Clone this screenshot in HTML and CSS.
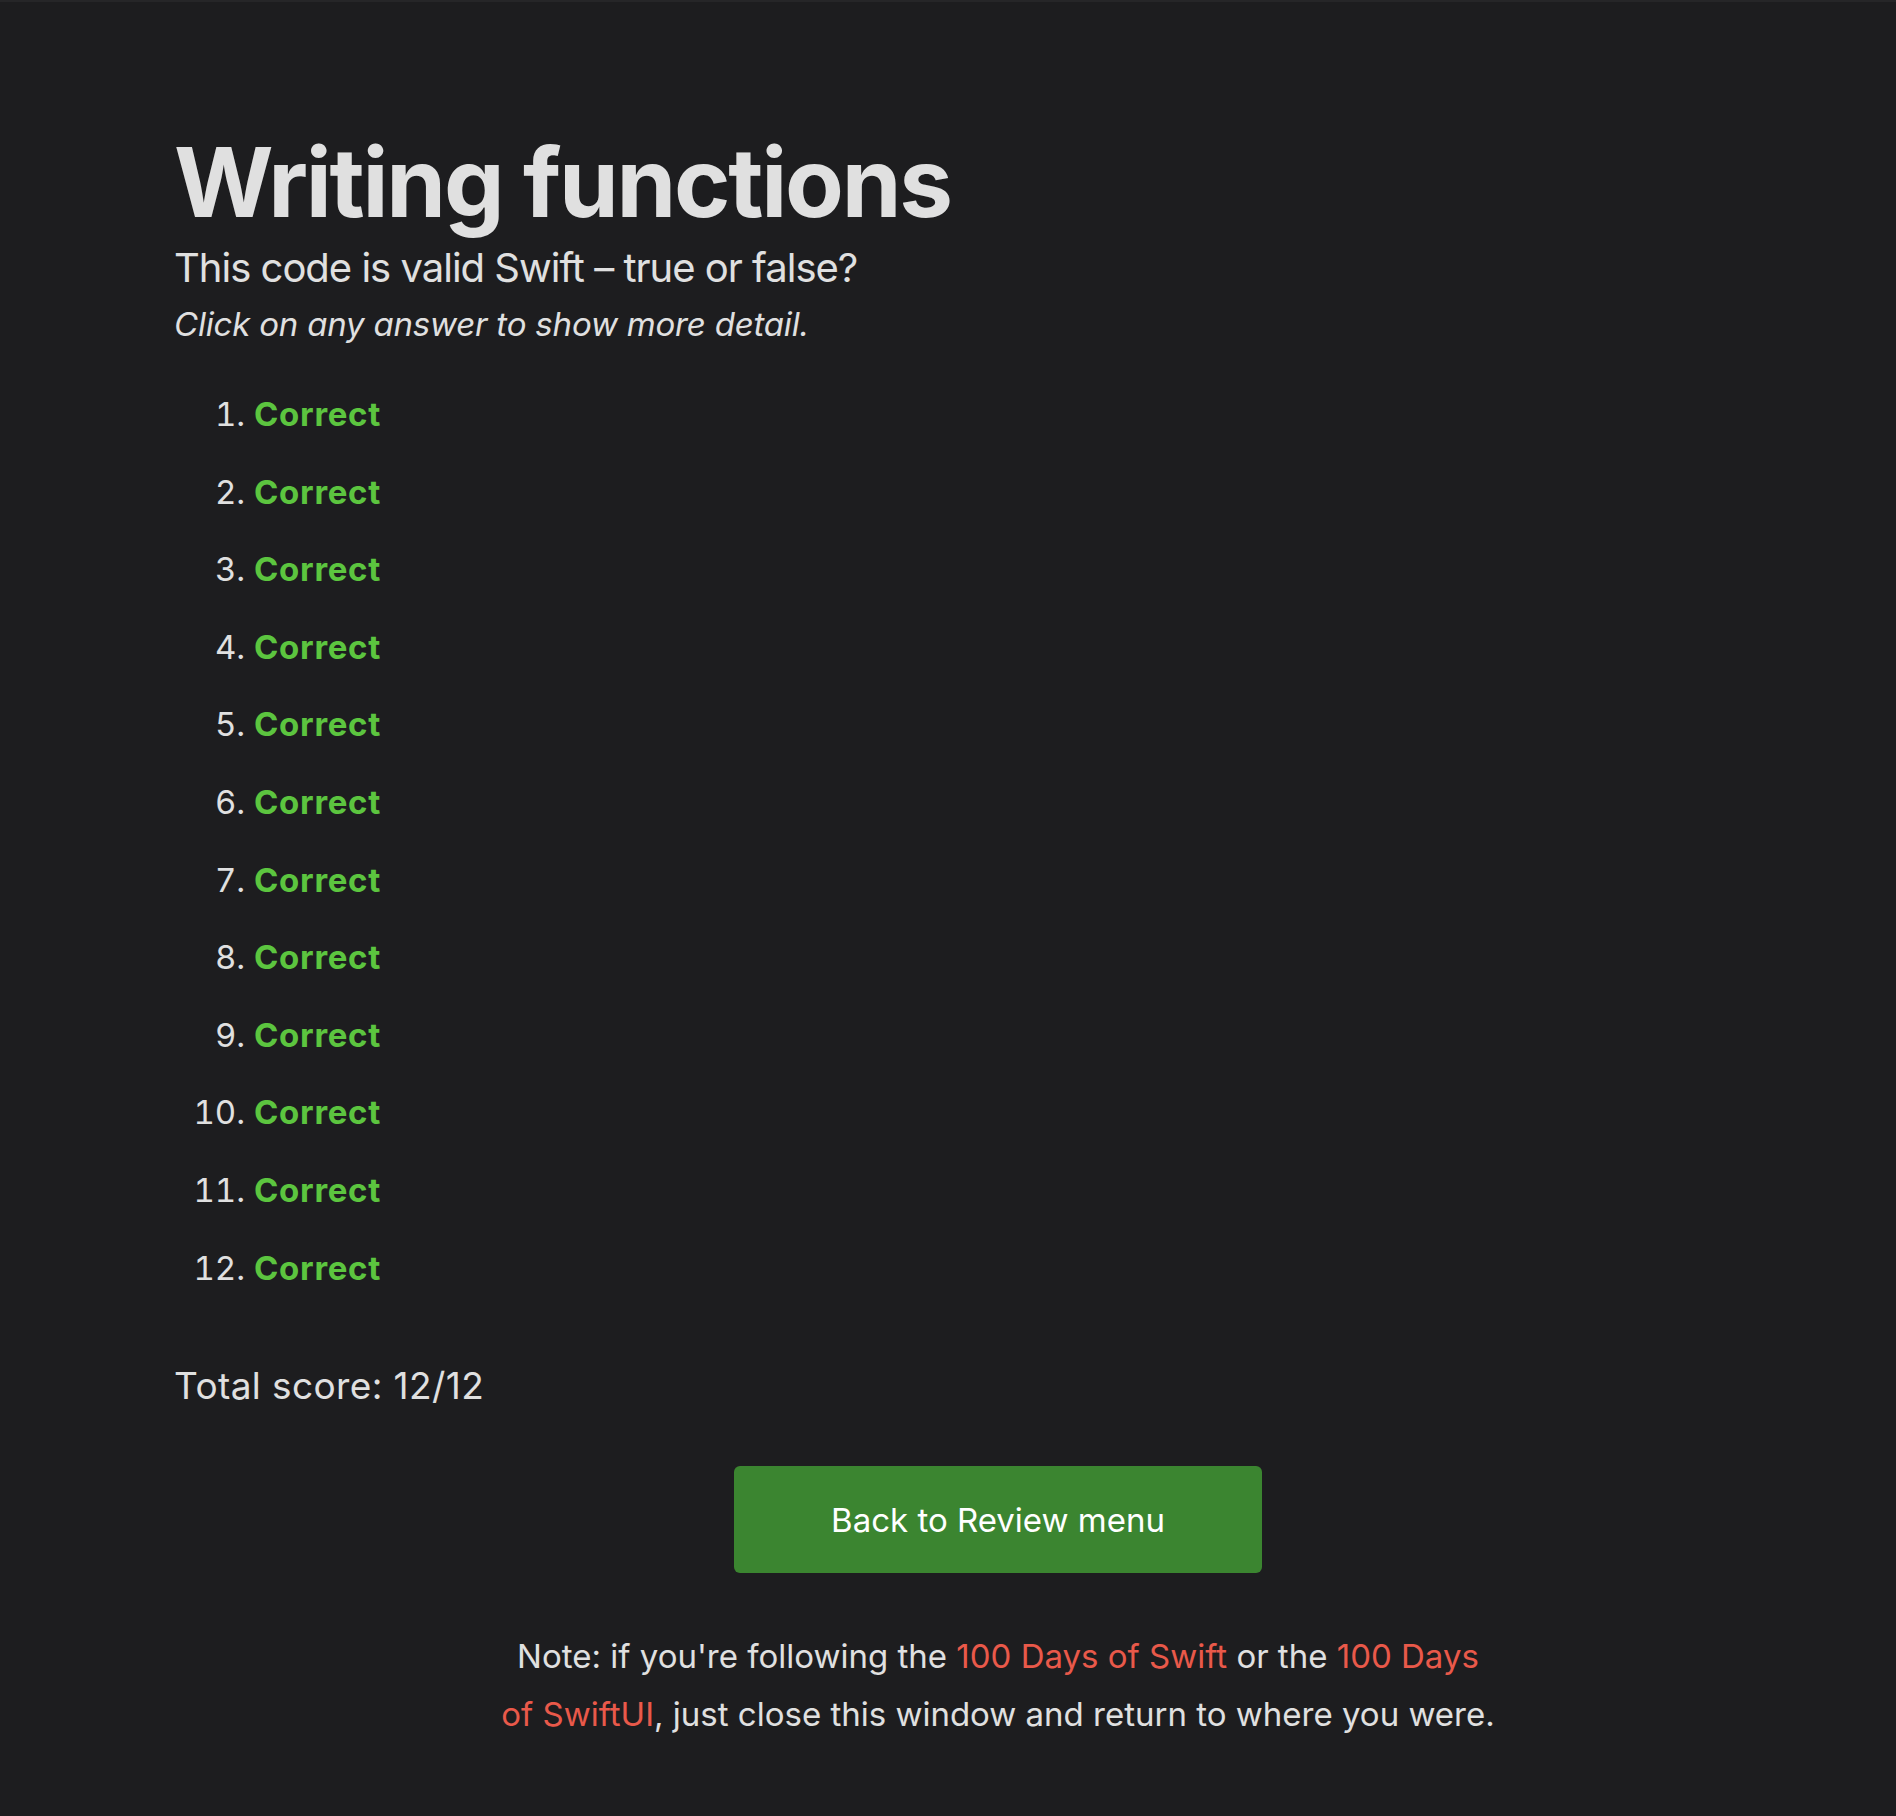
FILE: index.html
```html
<!DOCTYPE html>
<html lang="en">
<head>
<meta charset="utf-8">
<title>Writing functions</title>
<link rel="stylesheet" href="styles.css">
</head>
<body>
<div class="topline"></div>
<main class="page">
  <h1 class="title">Writing functions</h1>
  <p class="subtitle">This code is valid Swift – true or false?</p>
  <p class="hint">Click on any answer to show more detail.</p>
  <ol class="answers">
    <li><span class="correct">Correct</span></li>
    <li><span class="correct">Correct</span></li>
    <li><span class="correct">Correct</span></li>
    <li><span class="correct">Correct</span></li>
    <li><span class="correct">Correct</span></li>
    <li><span class="correct">Correct</span></li>
    <li><span class="correct">Correct</span></li>
    <li><span class="correct">Correct</span></li>
    <li><span class="correct">Correct</span></li>
    <li><span class="correct">Correct</span></li>
    <li><span class="correct">Correct</span></li>
    <li><span class="correct">Correct</span></li>
  </ol>
  <p class="score">Total score: 12/12</p>
  <div class="actions">
    <a class="button" href="#">Back to Review menu</a>
  </div>
  <p class="note">Note: if you're following the <a href="#">100 Days of Swift</a> or the <a href="#">100 Days of SwiftUI</a>, just close this window and return to where you were.</p>
</main>
</body>
</html>
```
FILE: styles.css
```css
html, body {
  margin: 0;
  padding: 0;
  background: #1d1d1f;
}
body {
  font-family: Inter, "Noto Sans", sans-serif;
  color: #e0e0e0;
  min-height: 1816px;
}
.topline {
  height: 2px;
  background: #262628;
}
.page {
  margin-left: 174px;
  width: 1648px;
  padding-top: 127px;
}
.title {
  margin: 0;
  font-size: 96px;
  line-height: 106px;
  font-weight: 700;
  letter-spacing: -2.2px;
}
.subtitle {
  margin: 9px 0 0;
  font-size: 40px;
  line-height: 48px;
  font-weight: 400;
  letter-spacing: -1px;
}
.hint {
  margin: 10px 0 0;
  font-size: 33px;
  line-height: 44px;
  font-style: italic;
  letter-spacing: -0.2px;
}
.answers {
  margin: 46px 0 0;
  padding-left: 80px;
  font-size: 33px;
  line-height: 44px;
}
.answers li + li {
  margin-top: 33.6px;
}
.correct {
  color: #5cc53f;
  font-weight: 700;
  letter-spacing: 0.7px;
}
.score {
  margin: 72px 0 0;
  font-size: 37px;
  line-height: 48px;
  letter-spacing: 0.4px;
}
.actions {
  display: flex;
  justify-content: center;
  margin-top: 56px;
}
.button {
  display: flex;
  align-items: center;
  justify-content: center;
  width: 528px;
  height: 107px;
  background: #3b8530;
  border-radius: 6px;
  color: #ffffff;
  text-decoration: none;
  font-size: 33px;
  padding-top: 2px;
  box-sizing: border-box;
}
.note {
  margin: 54px auto 0;
  max-width: 1000px;
  text-align: center;
  font-size: 33px;
  line-height: 58px;
}
.note a {
  color: #e9594a;
  text-decoration: none;
}
```
